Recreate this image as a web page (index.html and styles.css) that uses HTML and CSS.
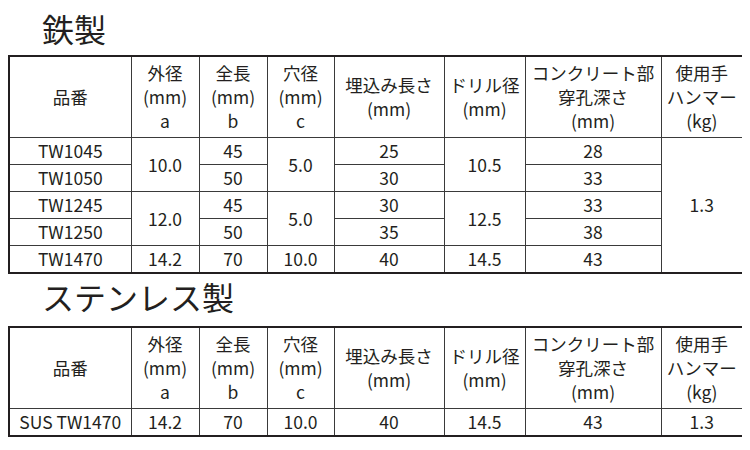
FILE: index.html
```html
<!DOCTYPE html>
<html lang="ja">
<head>
<meta charset="utf-8">
<link rel="stylesheet" href="styles.css">
</head>
<body>
<h2 class="title title-first">鉄製</h2>
<table class="spec">
  <colgroup>
    <col class="c-name"><col class="c-a"><col class="c-b"><col class="c-c"><col class="c-embed"><col class="c-drill"><col class="c-depth"><col class="c-hammer">
  </colgroup>
  <thead>
    <tr>
      <th>品番</th>
      <th>外径<br>(mm)<br>a</th>
      <th>全長<br>(mm)<br>b</th>
      <th>穴径<br>(mm)<br>c</th>
      <th>埋込み長さ<br>(mm)</th>
      <th>ドリル径<br>(mm)</th>
      <th>コンクリート部<br>穿孔深さ<br>(mm)</th>
      <th>使用手<br>ハンマー<br>(kg)</th>
    </tr>
  </thead>
  <tbody>
    <tr>
      <td>TW1045</td>
      <td rowspan="2">10.0</td>
      <td>45</td>
      <td rowspan="2">5.0</td>
      <td>25</td>
      <td rowspan="2">10.5</td>
      <td>28</td>
      <td rowspan="5">1.3</td>
    </tr>
    <tr>
      <td>TW1050</td>
      <td>50</td>
      <td>30</td>
      <td>33</td>
    </tr>
    <tr>
      <td>TW1245</td>
      <td rowspan="2">12.0</td>
      <td>45</td>
      <td rowspan="2">5.0</td>
      <td>30</td>
      <td rowspan="2">12.5</td>
      <td>33</td>
    </tr>
    <tr>
      <td>TW1250</td>
      <td>50</td>
      <td>35</td>
      <td>38</td>
    </tr>
    <tr>
      <td>TW1470</td>
      <td>14.2</td>
      <td>70</td>
      <td>10.0</td>
      <td>40</td>
      <td>14.5</td>
      <td>43</td>
    </tr>
  </tbody>
</table>
<h2 class="title title-second">ステンレス製</h2>
<table class="spec">
  <colgroup>
    <col class="c-name"><col class="c-a"><col class="c-b"><col class="c-c"><col class="c-embed"><col class="c-drill"><col class="c-depth"><col class="c-hammer">
  </colgroup>
  <thead>
    <tr>
      <th>品番</th>
      <th>外径<br>(mm)<br>a</th>
      <th>全長<br>(mm)<br>b</th>
      <th>穴径<br>(mm)<br>c</th>
      <th>埋込み長さ<br>(mm)</th>
      <th>ドリル径<br>(mm)</th>
      <th>コンクリート部<br>穿孔深さ<br>(mm)</th>
      <th>使用手<br>ハンマー<br>(kg)</th>
    </tr>
  </thead>
  <tbody>
    <tr>
      <td>SUS TW1470</td>
      <td>14.2</td>
      <td>70</td>
      <td>10.0</td>
      <td>40</td>
      <td>14.5</td>
      <td>43</td>
      <td>1.3</td>
    </tr>
  </tbody>
</table>
</body>
</html>
```

FILE: styles.css
```css
html, body {
  background: #ffffff;
}

body {
  margin: 8px;
  color: #231f20;
  font-family: "Noto Sans CJK JP", "Noto Sans", sans-serif;
}

.title {
  margin: 0;
  padding-left: 34px;
  font-size: 32px;
  font-weight: 400;
  line-height: 40px;
  color: #231f20;
}

.title-first {
  height: 47px;
}

.title-second {
  height: 52px;
  padding-top: 2px;
  box-sizing: border-box;
}

.spec {
  width: 734px;
  table-layout: fixed;
  border-collapse: collapse;
  border: 2px solid #231f20;
  font-size: 17.5px;
}

.c-name { width: 122px; }
.c-a { width: 68px; }
.c-b { width: 68px; }
.c-c { width: 67px; }
.c-embed { width: 110px; }
.c-drill { width: 81px; }
.c-depth { width: 136px; }
.c-hammer { width: 82px; }

.spec th,
.spec td {
  border: 1px solid #3a3a3a;
  padding: 0;
  text-align: center;
  vertical-align: middle;
  font-weight: 400;
  white-space: nowrap;
}

.spec th {
  height: 80px;
  line-height: 24px;
}

.spec td {
  height: 26px;
  line-height: 26px;
}
```
